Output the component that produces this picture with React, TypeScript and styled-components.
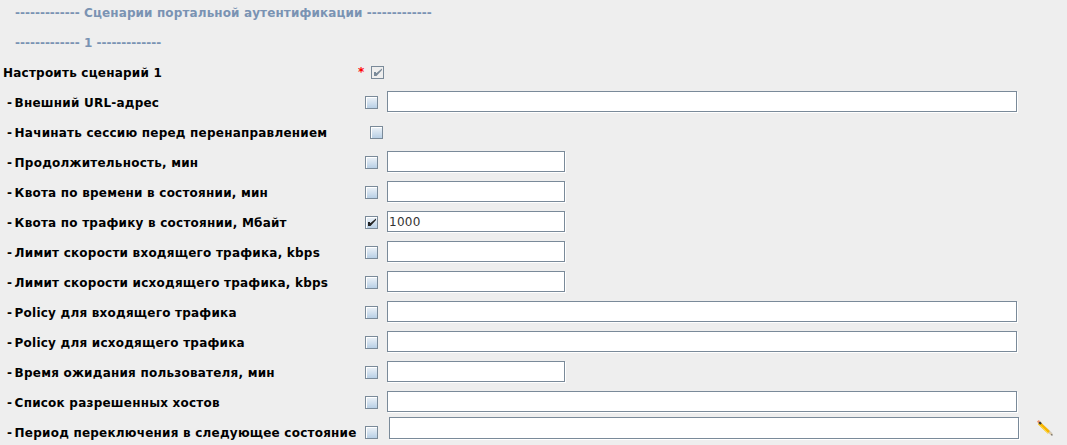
import React from "react";
import styled, { createGlobalStyle } from "styled-components";

interface Field {
  label: string;
  size?: "long" | "short";
  value?: string;
  checked?: boolean;
  labelWidth?: number;
  noInput?: boolean;
  pencil?: boolean;
}

const fields: Field[] = [
  { label: "Внешний URL-адрес", size: "long" },
  { label: "Начинать сессию перед перенаправлением", labelWidth: 363, noInput: true },
  { label: "Продолжительность, мин", size: "short" },
  { label: "Квота по времени в состоянии, мин", size: "short" },
  { label: "Квота по трафику в состоянии, Мбайт", size: "short", value: "1000", checked: true },
  { label: "Лимит скорости входящего трафика, kbps", size: "short" },
  { label: "Лимит скорости исходящего трафика, kbps", size: "short" },
  { label: "Policy для входящего трафика", size: "long" },
  { label: "Policy для исходящего трафика", size: "long" },
  { label: "Время ожидания пользователя, мин", size: "short" },
  { label: "Список разрешенных хостов", size: "long" },
  { label: "Период переключения в следующее состояние", size: "long", pencil: true },
];

const PencilIcon = () => (
  <svg width="18" height="18" viewBox="0 0 18 18">
    <path d="M5 5 L16 15" stroke="#c9c4bc" strokeWidth="2" opacity="0.7" />
    <path d="M3 4 L13 13.5" stroke="#f7b500" strokeWidth="3.2" />
    <path d="M2.2 4.6 L12 14" stroke="#ffdf4d" strokeWidth="1" />
    <path d="M3 3 L5 5" stroke="#3a3a3a" strokeWidth="2.4" />
    <path d="M1.8 1.8 L3.2 3.2" stroke="#f0936a" strokeWidth="2.6" />
    <path d="M13 13 L16 16" stroke="#d9c8a8" strokeWidth="2" />
    <path d="M15.4 15.4 L16.4 16.4" stroke="#555" strokeWidth="1.2" />
  </svg>
);

const CheckMark = () => (
  <svg width="11" height="11" viewBox="0 0 11 11">
    <path d="M2 5 L2 9 L4.5 9 L10 3 L10 1.5 L4.5 6 L4 6 L4 5 Z" fill="currentColor" />
  </svg>
);

const App: React.FC = () => (
  <>
    <GlobalStyle />
    <Page>
      <SectionTitle>
        -------------<Words> Сценарии портальной аутентификации </Words>-------------
      </SectionTitle>
      <SectionTitle $tight>------------- 1 -------------</SectionTitle>
      <Row>
        <Label width={358} $flush>
          Настроить сценарий 1
        </Label>
        <Required>*</Required>
        <CheckBox $disabled>
          <CheckMark />
        </CheckBox>
      </Row>
      {fields.map((f) => (
        <Row key={f.label}>
          <Label width={f.labelWidth ?? 358}>
            <Bullet>- </Bullet>
            {f.label}
          </Label>
          <CheckBox $checked={f.checked}>{f.checked && <CheckMark />}</CheckBox>
          {!f.noInput && (
            <TextField $size={f.size} $tall={f.pencil} defaultValue={f.value} />
          )}
          {f.pencil && (
            <PencilSlot>
              <PencilIcon />
            </PencilSlot>
          )}
        </Row>
      ))}
    </Page>
  </>
);

const GlobalStyle = createGlobalStyle`
  html, body {
    margin: 0;
    padding: 0;
    height: 100%;
    background: #eeeeee;
    overflow: hidden;
  }
`;

const Page = styled.div`
  font-family: "DejaVu Sans", sans-serif;
  font-size: 12px;
  font-weight: bold;
  color: #000;
`;

const SectionTitle = styled.div<{ $tight?: boolean }>`
  height: ${({ $tight }) => ($tight ? 27 : 30)}px;
  line-height: 26px;
  padding-left: 15px;
  color: #7a93b3;
`;

const Words = styled.span`
  letter-spacing: 0.12px;
`;

const Row = styled.div`
  display: flex;
  align-items: center;
  height: 30px;
`;

const Label = styled.label<{ width: number; $flush?: boolean }>`
  box-sizing: border-box;
  flex: none;
  width: ${({ width }) => width + 7}px;
  padding-left: ${({ $flush }) => ($flush ? 3 : 7)}px;
  padding-top: 2px;
  letter-spacing: 0.22px;
  white-space: nowrap;
`;

const Bullet = styled.span`
  margin-right: -2px;
`;

const Required = styled.span`
  flex: none;
  width: 7px;
  margin-left: -7px;
  margin-right: 6px;
  color: #ff0000;
`;

const CheckBox = styled.span<{ $checked?: boolean; $disabled?: boolean }>`
  box-sizing: border-box;
  flex: none;
  display: flex;
  align-items: center;
  justify-content: center;
  width: 13px;
  height: 13px;
  border: 1px solid #7a8a99;
  color: ${({ $disabled }) => ($disabled ? "#7a8a99" : "#222")};
  background: ${({ $disabled }) =>
    $disabled ? "#eeeeee" : "linear-gradient(#eef3f8, #b8cfe5)"};
  box-shadow: inset 1px 1px 0 ${({ $disabled }) => ($disabled ? "#eeeeee" : "#fff")};
`;

const TextField = styled.input<{ $size?: "long" | "short"; $tall?: boolean }>`
  box-sizing: border-box;
  flex: none;
  align-self: flex-start;
  width: ${({ $size }) => ($size === "short" ? 178 : 630)}px;
  height: ${({ $tall }) => ($tall ? 22 : 21)}px;
  margin: ${({ $tall }) => ($tall ? "0 0 0 11px" : "4px 0 0 9px")};
  padding: 0 0 0 1px;
  border: 1px solid #7a8a99;
  border-radius: 0;
  outline: none;
  background: #fff;
  box-shadow: 1px 1px 0 #fff;
  font-family: "DejaVu Sans", sans-serif;
  font-size: 12px;
  letter-spacing: 0.3px;
  color: #333;
`;

const PencilSlot = styled.span`
  display: flex;
  align-self: flex-start;
  margin: 2px 0 0 17px;
`;

export default App;
